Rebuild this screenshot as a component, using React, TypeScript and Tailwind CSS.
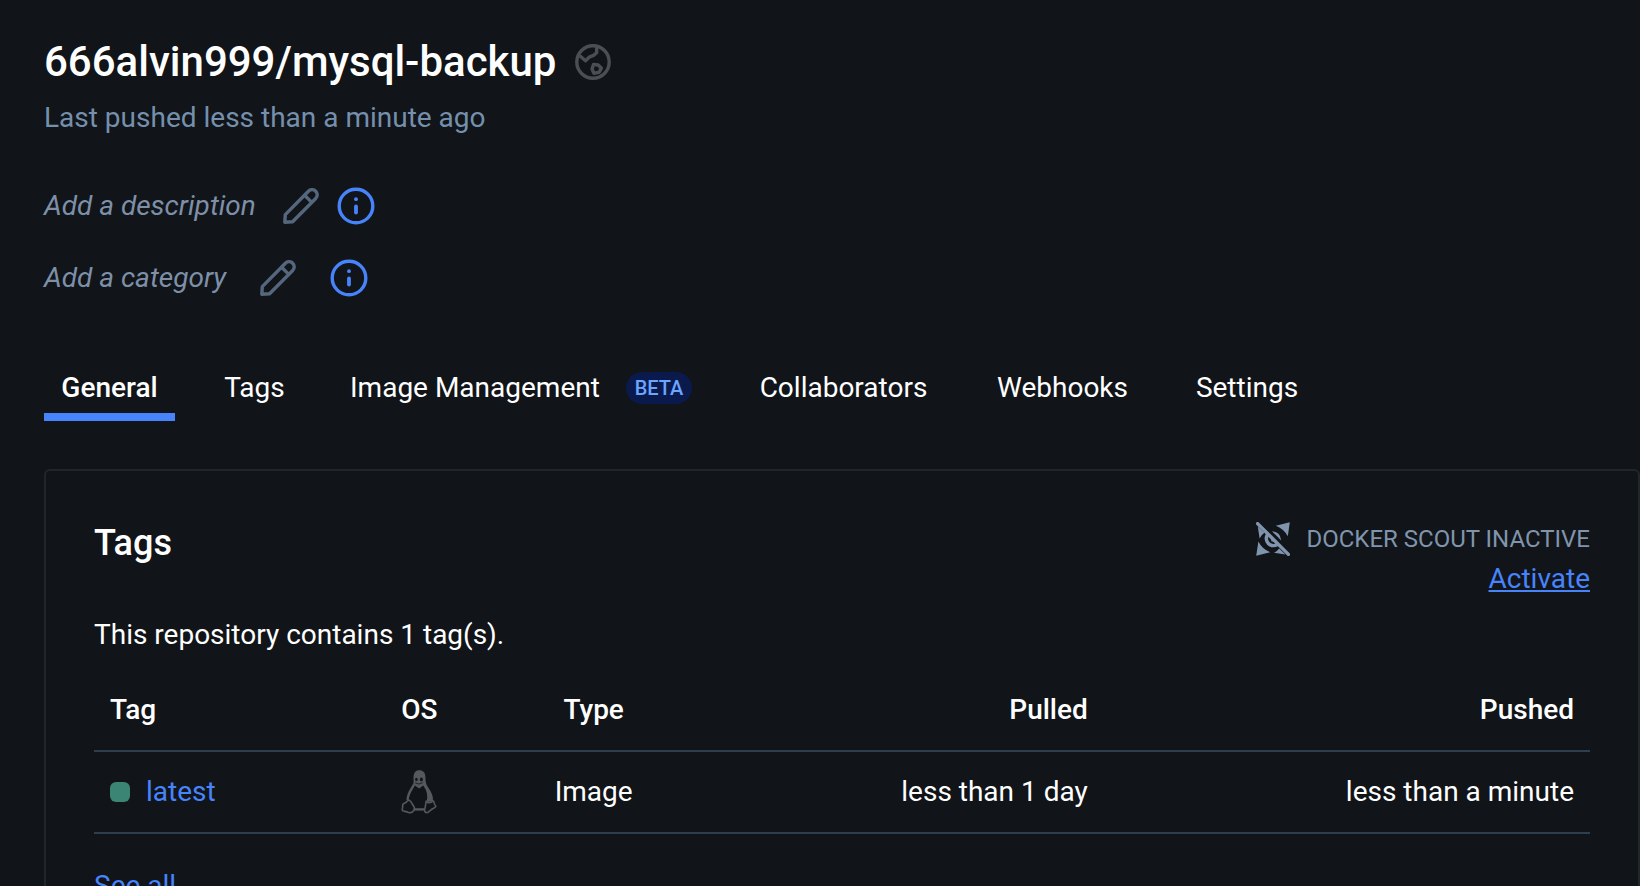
import React from "react";

function GlobeIcon() {
  return (
    <svg viewBox="0 0 36 36" className="size-9 text-[#4b4f54]" fill="none" stroke="currentColor" strokeWidth="3.4" strokeLinejoin="round" role="img" aria-label="Public">
      <circle cx="18" cy="18" r="16.2" />
      <path d="M4.5 11.500 10.500 16.800l4.200-4 3.800-1.400 3.200-2.600V2.500" />
      <path d="M18.600 20.400 23.200 21l3.200 3.200-2.400 4.200-5.200.8-1.800-4.400Z" />
    </svg>
  );
}

function PencilIcon() {
  return (
    <svg viewBox="0 0 36 36" className="size-9" fill="none" stroke="currentColor" strokeWidth="3.4" strokeLinejoin="round" aria-hidden="true">
      <path d="M1.800 34.200 2.300 26.600 25.400 3.200a5.100 5.100 0 0 1 7.300 0 5.100 5.100 0 0 1 0 7.300L9.600 33.700Z" />
      <path d="m21.600 7.200 7.200 7.200" />
    </svg>
  );
}

function InfoIcon() {
  return (
    <svg viewBox="0 0 38 38" className="size-[38px]" fill="none" stroke="currentColor" aria-hidden="true">
      <circle cx="19" cy="19" r="16.800" strokeWidth="3.400" />
      <path d="M19 19.500v6" strokeWidth="3.800" strokeLinecap="round" />
      <circle cx="19" cy="12.200" r="1.900" fill="currentColor" stroke="none" />
    </svg>
  );
}

function ScoutOffIcon() {
  return (
    <svg viewBox="0 0 34 34" className="size-[34px]" fill="currentColor" aria-hidden="true">
      <path d="M33.800.2 31.800 14.200Q27.600 6.800 19.800 3.800Z" />
      <path d="M.2 33.800 2.400 19.600Q6.200 27.400 14.200 30.200Z" />
      <path d="M1.800 4.400 8.400 10.800Q5 13.200 3.600 16.600Z" />
      <path d="M29.400 32.400 23.200 26.400Q21 29.400 18 30.800Z" />
      <path d="M15.800 9.200Q24.400 9.400 25.200 18.400L19.800 13Z" />
      <path d="M11.600 12.600a7 7 0 0 0 9.600 9.800" fill="none" stroke="currentColor" strokeWidth="3.600" />
      <path d="M14.400 15 19 19.600 15.600 19.400Z" />
      <path d="M1.600 1.600 32.400 32.400" fill="none" stroke="currentColor" strokeWidth="3.400" strokeLinecap="round" />
    </svg>
  );
}

function LinuxIcon() {
  return (
    <svg viewBox="0 0 36 44" className="mx-auto block h-11 w-9 text-[#55585c]" fill="none" stroke="currentColor" strokeWidth="1.600" strokeLinejoin="round" role="img" aria-label="Linux">
      <path
        fill="currentColor"
        stroke="none"
        d="M18.200.2c4 0 6 2.400 6.200 6.400.1 4 .2 6.800 2.200 10 2.400 3.800 5.400 7.600 5.400 13l-1.200 2-5.400.4c1.600-4.800.6-9.600-1-13-.8-1.800-1.600-2.600-2.200-3.600l-4 3.200-4-2.800-1.800-2.800c.6-2.800-.2-4.800.2-7.200.4-3.600 2.200-5.600 5.600-5.600Z"
      />
      <ellipse cx="15.400" cy="9.400" rx="1.300" ry="1.700" fill="#111418" stroke="none" />
      <ellipse cx="20.400" cy="9.400" rx="1.500" ry="1.900" fill="#111418" stroke="none" />
      <path d="m14.200 12.800 3.600 1.300 4-1.500" stroke="#111418" strokeWidth="0.800" />
      <path d="M13.400 13.600C12 18 6.800 22 6.600 30" strokeWidth="2.400" />
      <path d="M8.200 30.200c2.200 1.400 3.200 4.400 4.600 6.200 1.200 2 .8 3.600-.8 5-1.600 1.600-3.200 1.600-5 .8-1.600-.8-3.800-.8-5.400-1.400-.8-1 .2-3 0-4.600-.2-2.200.6-2.800 2.400-3.200C6 32.600 5.800 30 8.200 30.200Z" />
      <path d="M25.200 31.200c-.6 3-.8 6-1.600 8.600-.2 2.400 1.600 3.400 3.600 2.400 2.200-1.800 3.200-3 5.400-4 2.600-1.400 2.800-2 1.400-3.200-1-1.200-.8-3.600-2-4.400-1.400 2.400-5 3-6.800.6Z" />
      <path d="M12.600 39.400h11.200" strokeWidth="2.400" />
    </svg>
  );
}

const tabs = [
  { label: "General", active: true, width: "min-w-[131px]" },
  { label: "Tags", width: "min-w-[95px]" },
  { label: "Image Management", badge: "BETA", width: "min-w-[374px]" },
  { label: "Collaborators", width: "min-w-[207px]" },
  { label: "Webhooks", width: "min-w-[167px]" },
  { label: "Settings", width: "min-w-[138px]" },
];

export default function App() {
  return (
    <div className="h-screen overflow-hidden bg-[#111418] pl-11 font-['Roboto',sans-serif] text-[28px] leading-10 text-white">
      <header className="pt-9">
        <div className="flex items-center gap-[19px]">
          <h1 className="text-[42px] leading-[52px] font-medium">666alvin999/mysql-backup</h1>
          <GlobeIcon />
        </div>
        <p className="mt-2.5 text-[#7590ad]">Last pushed less than a minute ago</p>
      </header>

      <section aria-label="Repository details" className="mt-12 grid gap-8 text-[#7d90a8]">
        <div className="flex h-10 items-center gap-[18px]">
          <span className="min-w-[221px] italic">Add a description</span>
          <button type="button" aria-label="Edit description" className="text-[#55677e]"><PencilIcon /></button>
          <button type="button" aria-label="About descriptions" className="text-[#4784fc]"><InfoIcon /></button>
        </div>
        <div className="flex h-10 items-center gap-[34px]">
          <span className="min-w-[182px] italic">Add a category</span>
          <button type="button" aria-label="Edit category" className="text-[#55677e]"><PencilIcon /></button>
          <button type="button" aria-label="About categories" className="text-[#4784fc]"><InfoIcon /></button>
        </div>
      </section>

      <nav aria-label="Repository" className="mt-16 flex gap-8">
        {tabs.map((tab) => (
          <a
            key={tab.label}
            href={"#" + tab.label.toLowerCase().replace(" ", "-")}
            aria-current={tab.active ? "page" : undefined}
            className={
              (tab.active ? "border-b-8 border-[#4784fc] font-medium " : "") +
              (tab.badge ? "justify-between " : "justify-center ") +
              "flex h-[59px] items-start px-4 pt-1.5 " +
              tab.width
            }
          >
            {tab.label}
            {tab.badge && (
              <span className="mt-1 min-w-[66px] rounded-full bg-[#0b1a4d] px-2 text-center text-[20px] leading-8 font-medium text-[#6aa5ff]">
                {tab.badge}
              </span>
            )}
          </a>
        ))}
      </nav>

      <main className="mt-12 rounded-md border-2 border-[#1f272c] px-12 pt-12 pb-12">
        <div className="flex items-start justify-between">
          <h2 className="pt-1 text-[36px] leading-10 font-medium">Tags</h2>
          <div className="flex flex-col items-end text-right">
            <div className="flex items-center gap-4 text-[24px] text-[#8095ad]">
              <ScoutOffIcon />
              <span>DOCKER SCOUT INACTIVE</span>
            </div>
            <a href="#activate" className="text-[#4784fc] underline">Activate</a>
          </div>
        </div>

        <p className="mt-4">This repository contains 1 tag(s).</p>

        <table className="mt-3.5 w-full table-fixed border-collapse">
          <colgroup>
            <col className="w-[17.8%]" />
            <col className="w-[7.9%]" />
            <col className="w-[15.4%]" />
            <col className="w-[26.4%]" />
            <col className="w-[32.5%]" />
          </colgroup>
          <thead>
            <tr className="h-[82px] border-b-2 border-[#2f3e4e]">
              <th className="px-4 text-left font-medium">Tag</th>
              <th className="px-4 text-center font-medium">OS</th>
              <th className="px-4 text-center font-medium">Type</th>
              <th className="px-4 text-right font-medium">Pulled</th>
              <th className="px-4 text-right font-medium">Pushed</th>
            </tr>
          </thead>
          <tbody>
            <tr className="h-[82px] border-b-2 border-[#2f3e4e]">
              <td className="px-4">
                <div className="flex items-center gap-4">
                  <span className="size-5 rounded-md bg-[#3b8574]" />
                  <a href="#latest" className="text-[#4784fc]">latest</a>
                </div>
              </td>
              <td className="px-4"><LinuxIcon /></td>
              <td className="px-4 text-center">Image</td>
              <td className="px-4 text-right">less than 1 day</td>
              <td className="px-4 text-right">less than a minute</td>
            </tr>
          </tbody>
        </table>

        <a href="#all-tags" className="mt-8 block w-fit text-[#4784fc]">See all</a>
      </main>
    </div>
  );
}
